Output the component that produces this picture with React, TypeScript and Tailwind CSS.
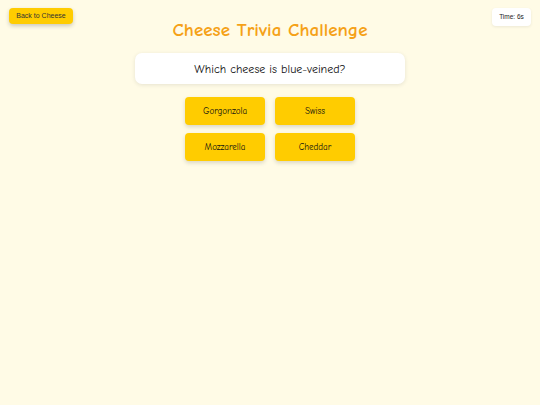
import { useEffect, useState } from 'react';

const options = ['Gorgonzola', 'Swiss', 'Mozzarella', 'Cheddar'];

const App = () => {
  const [time, setTime] = useState(6);

  useEffect(() => {
    const id = setInterval(() => setTime(t => (t > 0 ? t : t)), 1000);
    return () => clearInterval(id);
  }, []);

  return (
    <div className="relative min-h-[405px] w-full bg-[#fffbe6] font-['Comic_Sans_MS','Comic_Neue',cursive]">
      <button className="absolute left-[9px] top-[8px] h-[16px] w-[64px] rounded-[4px] bg-[#ffcc00] font-['Liberation_Sans',sans-serif] text-[7px] text-[#333] shadow-[0_2px_4px_rgba(0,0,0,0.2)]">
        Back to Cheese
      </button>
      <div className="absolute right-[9px] top-[8px] flex h-[18px] w-[39px] items-center justify-center rounded-[4px] bg-white font-['Liberation_Sans',sans-serif] text-[6.5px] font-medium text-[#222] shadow-[0_1px_3px_rgba(0,0,0,0.08)]">
        Time: {time}s
      </div>

      <div className="flex flex-col items-center pt-[16px]">
        <h1 className="text-[19px] font-bold leading-[28px] text-[#f5a117]">
          Cheese Trivia Challenge
        </h1>
        <div className="mt-[9px] flex h-[31px] w-[270px] items-center justify-center rounded-[7px] bg-white pt-[1px] text-[12px] font-medium text-[#111] shadow-[0_1px_4px_rgba(0,0,0,0.1)]">
          Which cheese is blue-veined?
        </div>
        <div className="mt-[13px] grid grid-cols-2 gap-x-[10px] gap-y-[8px]">
          {options.map(option => (
            <button
              key={option}
              className="h-[28px] w-[80px] rounded-[4px] bg-[#ffcc00] pt-[2px] text-[9px] font-medium text-[#111] shadow-[0_2px_4px_rgba(0,0,0,0.15)]"
            >
              {option}
            </button>
          ))}
        </div>
      </div>
    </div>
  );
};

export default App;
